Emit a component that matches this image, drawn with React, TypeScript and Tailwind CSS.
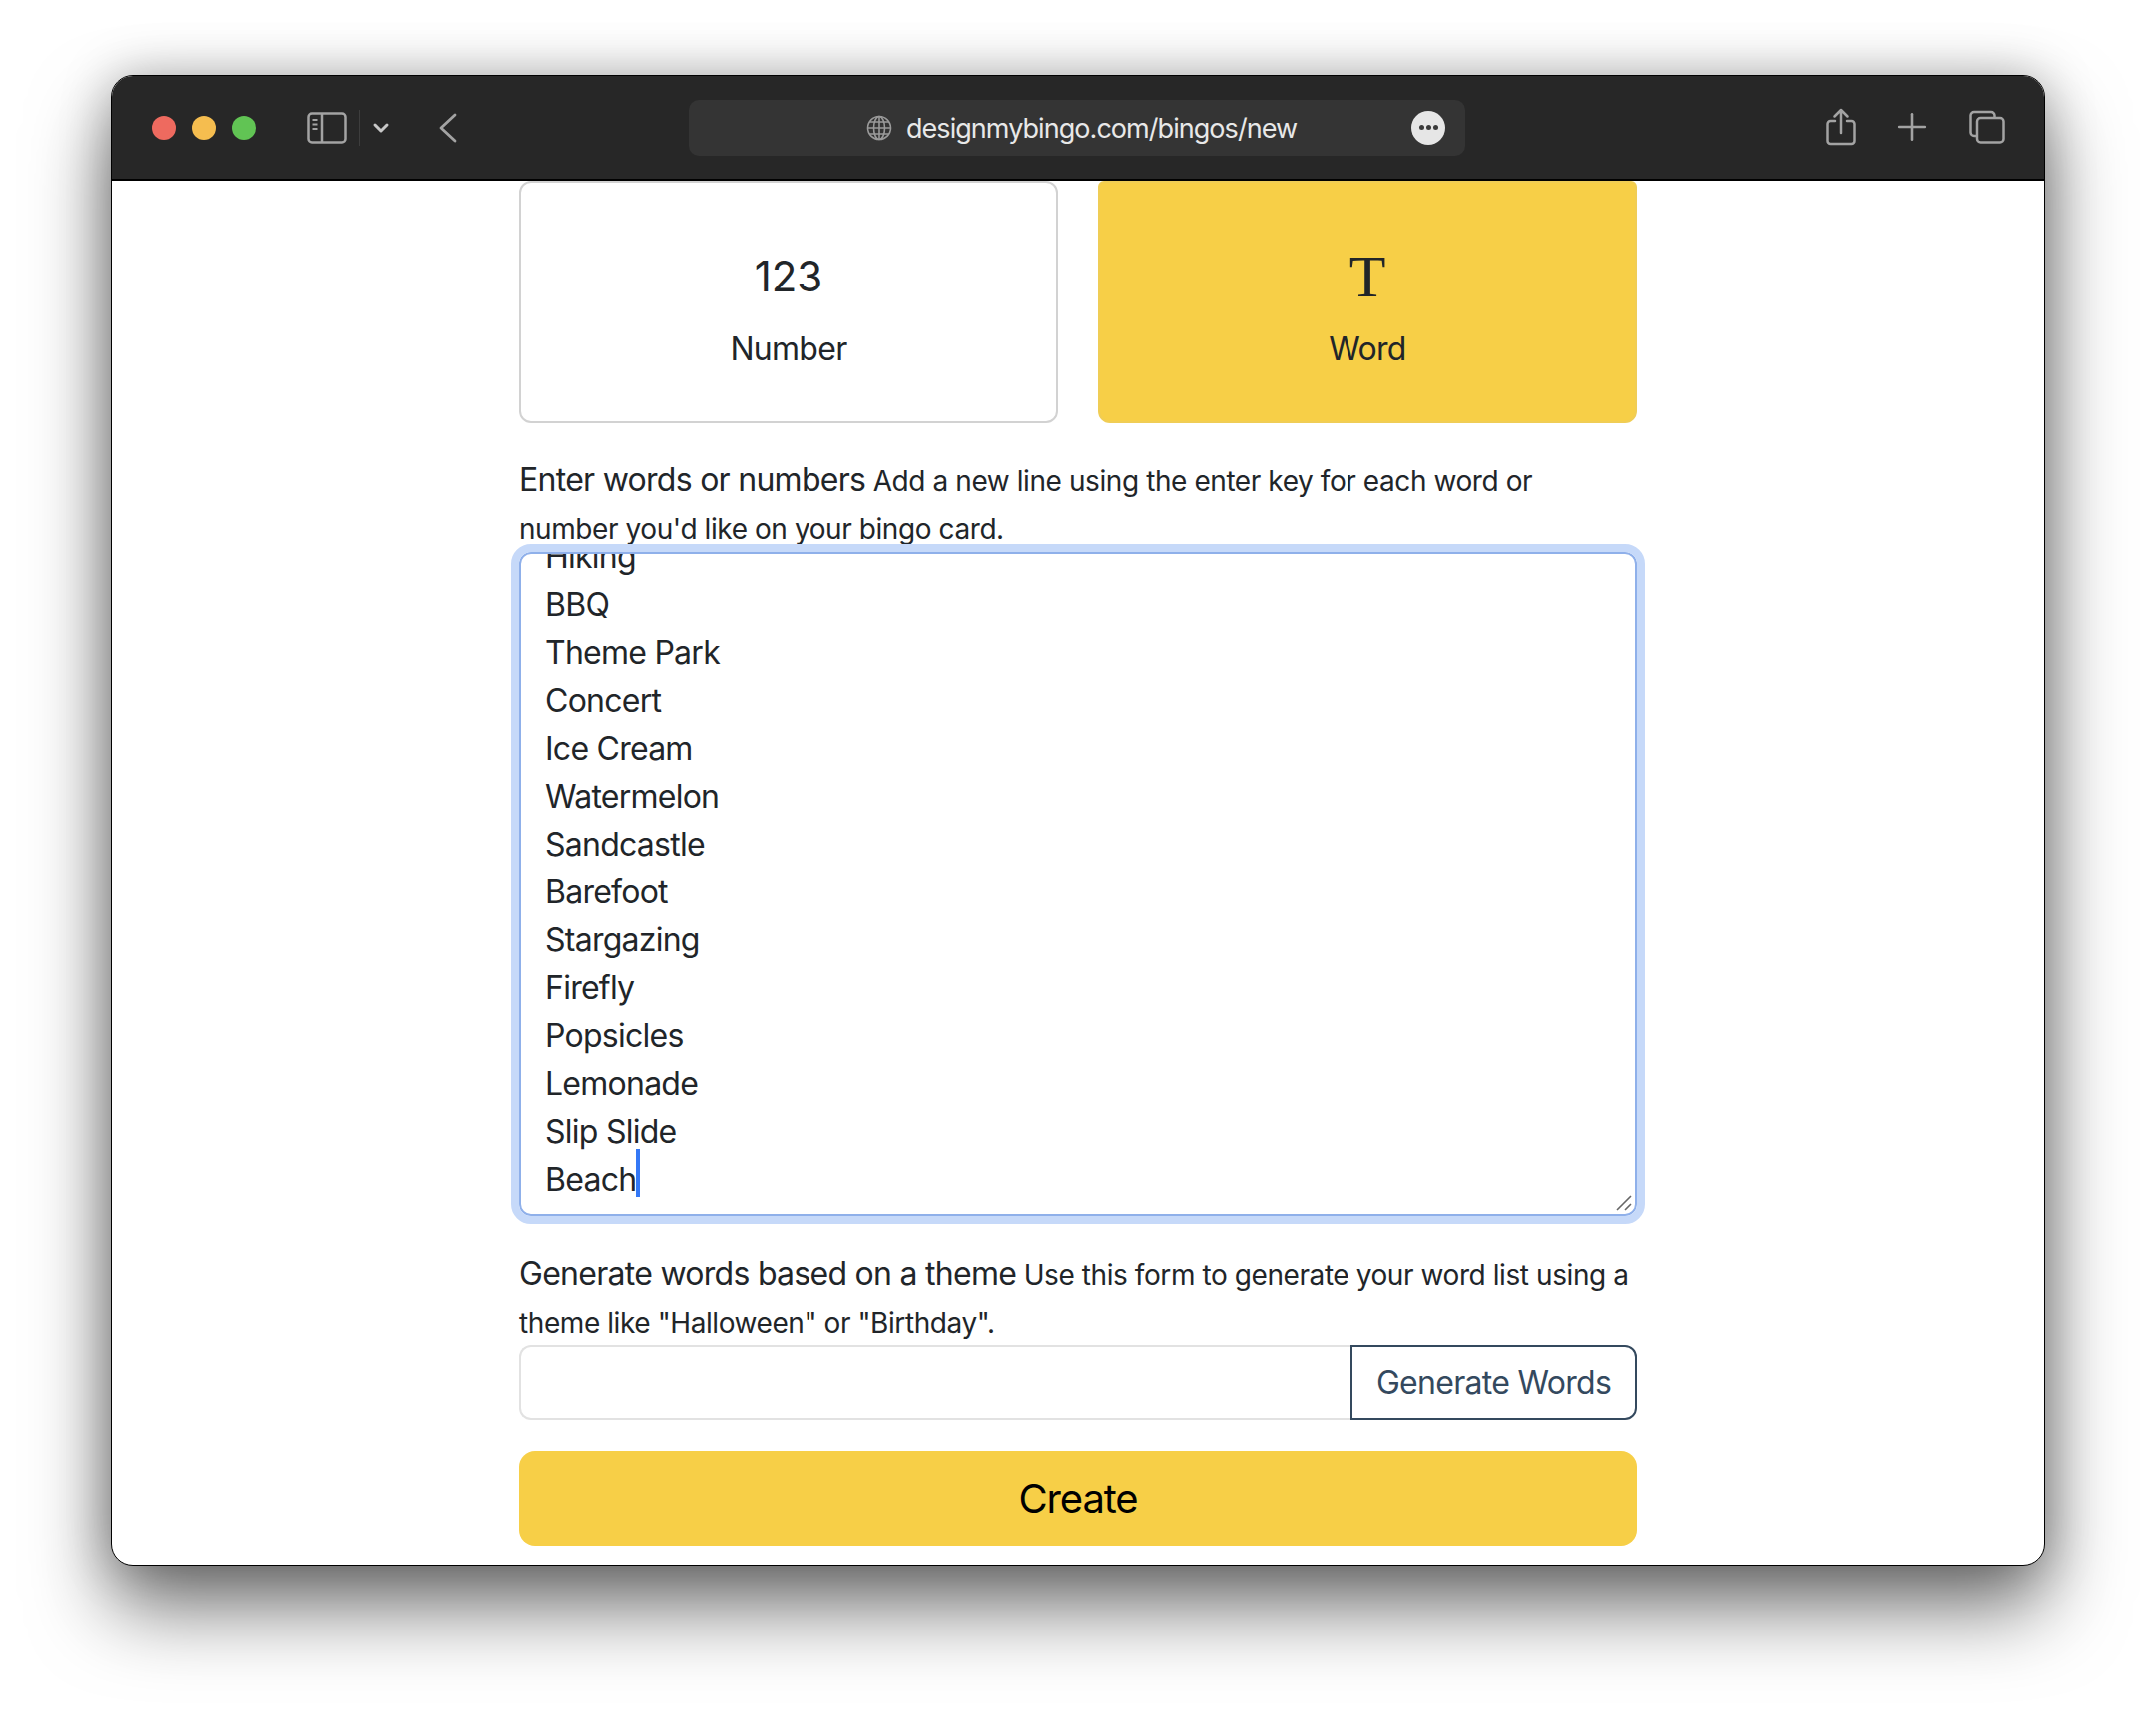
import { ChevronDown, Plus } from "lucide-react";

const FONT = "font-['Inter','Liberation_Sans',sans-serif]";

const WORDS = [
  "Hiking",
  "BBQ",
  "Theme Park",
  "Concert",
  "Ice Cream",
  "Watermelon",
  "Sandcastle",
  "Barefoot",
  "Stargazing",
  "Firefly",
  "Popsicles",
  "Lemonade",
  "Slip Slide",
];

function SidebarIcon() {
  return (
    <svg width="40" height="32" viewBox="0 0 40 32" fill="none" stroke="#a3a3a3" strokeWidth="2.5">
      <rect x="1.5" y="1.5" width="37" height="29" rx="3.5" />
      <path d="M15 1.5v29" />
      <path d="M5.5 8h5M5.5 12.5h5M5.5 17h5" strokeWidth="2" />
    </svg>
  );
}

function BackIcon() {
  return (
    <svg width="20" height="30" viewBox="0 0 20 30" fill="none" stroke="#a3a3a3" strokeWidth="2.8" strokeLinecap="round" strokeLinejoin="round">
      <path d="M17 2 3 15l14 13" />
    </svg>
  );
}

function ShareIcon() {
  return (
    <svg width="30" height="38" viewBox="0 0 30 38" fill="none" stroke="#a3a3a3" strokeWidth="2.5" strokeLinecap="round" strokeLinejoin="round">
      <path d="M9 13H4.5a3 3 0 0 0-3 3v17a3 3 0 0 0 3 3h21a3 3 0 0 0 3-3V16a3 3 0 0 0-3-3H21" />
      <path d="M15 25V2M8.5 8.5 15 2l6.5 6.5" />
    </svg>
  );
}

function TabsIcon() {
  return (
    <svg width="36" height="34" viewBox="0 0 36 34" fill="none" stroke="#a3a3a3" strokeWidth="2.5">
      <path d="M7 26H5a3.5 3.5 0 0 1-3.5-3.5v-17A3.5 3.5 0 0 1 5 2h17a3.5 3.5 0 0 1 3.5 3.5V8" />
      <rect x="8" y="8" width="26.5" height="24.5" rx="3.5" />
    </svg>
  );
}

function GlobeIcon() {
  return (
    <svg width="26" height="26" viewBox="0 0 26 26" fill="none" stroke="#9a9a9a" strokeWidth="1.6">
      <circle cx="13" cy="13" r="11.5" />
      <ellipse cx="13" cy="13" rx="5.5" ry="11.5" />
      <path d="M13 1.5v23M1.5 13h23M3.2 7h19.6M3.2 19h19.6" />
    </svg>
  );
}

function TitleBar() {
  return (
    <div className="flex h-[105px] shrink-0 items-center border-b-2 border-black bg-[#272727] pl-[40px] pr-[39px]">
      <div className="flex items-center gap-[16px]">
        <span className="h-[24px] w-[24px] rounded-full bg-[#ee6a5f]" />
        <span className="h-[24px] w-[24px] rounded-full bg-[#f5bd4f]" />
        <span className="h-[24px] w-[24px] rounded-full bg-[#61c454]" />
      </div>
      <div className="ml-[52px] flex items-center">
        <SidebarIcon />
        <span className="ml-[12px] h-[36px] w-px bg-[#3d3d3d]" />
        <ChevronDown className="ml-[9px] h-[24px] w-[24px] text-[#c8c8c8]" strokeWidth={3} />
      </div>
      <span className="ml-[45px] flex">
        <BackIcon />
      </span>
      <div className="ml-[231px] flex h-[56px] w-[778px] items-center rounded-[10px] bg-[#343434] pl-[178px] pr-[20px]">
        <GlobeIcon />
        <span className="ml-[14px] mt-[3px] text-[27px] tracking-[-0.95px] text-[#e8e8e8]">designmybingo.com/bingos/new</span>
        <span className="ml-auto flex h-[34px] w-[34px] items-center justify-center gap-[2px] rounded-full bg-[#e6e6e6]">
          <span className="h-[5px] w-[5px] rounded-full bg-[#3a3a3a]" />
          <span className="h-[5px] w-[5px] rounded-full bg-[#3a3a3a]" />
          <span className="h-[5px] w-[5px] rounded-full bg-[#3a3a3a]" />
        </span>
      </div>
      <div className="ml-auto -mt-[2px] flex items-center">
        <ShareIcon />
        <Plus className="ml-[35px] h-[44px] w-[44px] text-[#a3a3a3]" strokeWidth={1.4} />
        <span className="ml-[35px]">
          <TabsIcon />
        </span>
      </div>
    </div>
  );
}

function TypeCard({ active, label, children }: { active?: boolean; label: string; children: React.ReactNode }) {
  return (
    <div
      className={
        active
          ? "flex h-[243px] w-[540px] flex-col items-center rounded-b-[12px] rounded-t-[6px] border-2 border-[#f0cd55] bg-[#f7cf47] text-[#212529]"
          : "flex h-[243px] w-[540px] flex-col items-center rounded-[12px] border-2 border-[#d2d2d2] bg-white text-[#212529]"
      }
    >
      <div className="mt-[62px] flex h-[64px] items-center justify-center">{children}</div>
      <div className="mt-[17px] text-[32px] leading-[48px] tracking-[-0.7px]">{label}</div>
    </div>
  );
}

export default function App() {
  return (
    <div className={`h-[1716px] w-[2160px] overflow-hidden bg-white pl-[111px] pt-[75px] ${FONT}`}>
      <div className="flex h-[1494px] w-[1938px] flex-col overflow-hidden rounded-[22px] border border-black bg-white shadow-[0_42px_80px_rgba(0,0,0,0.55),0_0_50px_rgba(0,0,0,0.25)]">
        <TitleBar />
        <div className="mx-auto flex w-[1120px] flex-col text-[#212529]">
          <div className="flex justify-between">
            <TypeCard label="Number">
              <span className="text-[42px] leading-none">123</span>
            </TypeCard>
            <TypeCard active label="Word">
              <span className="font-['Liberation_Serif',serif] text-[60px] leading-none">T</span>
            </TypeCard>
          </div>

          <div className="mt-[34px] text-[28px] leading-[48px] tracking-[-0.42px]">
            <span className="text-[32px] leading-none tracking-[-0.72px]">Enter words or numbers</span>{" "}
            Add a new line using the enter key for each word or
            <br />
            number you'd like on your bingo card.
          </div>

          <div className="relative -mt-[1px] flex h-[665px] flex-col justify-end overflow-hidden rounded-[12px] border-2 border-[#8fb0ea] bg-white px-[24px] pb-[10px] text-[32px] leading-[48px] tracking-[-0.75px] outline-8 outline-[#c6d9f9]">
            {WORDS.map((word) => (
              <div key={word} className="shrink-0">
                {word}
              </div>
            ))}
            <div className="flex shrink-0 items-center">
              Beach
              <span className="-mt-[14px] h-[48px] w-[4px] shrink-0 bg-[#3478f6]" />
            </div>
            <svg className="absolute bottom-[2px] right-[2px]" width="18" height="18" viewBox="0 0 18 18" stroke="#666" strokeWidth="1.6">
              <path d="M2 16 16 2M10 16l6-6" />
            </svg>
          </div>

          <div className="mt-[35px] text-[28px] leading-[48px] tracking-[-0.42px]">
            <span className="text-[32px] leading-none tracking-[-0.72px]">Generate words based on a theme</span>{" "}
            Use this form to generate your word list using a theme like "Halloween" or "Birthday".
          </div>

          <div className="-mt-[2px] flex h-[75px]">
            <input className="min-w-0 flex-1 rounded-l-[12px] border-2 border-r-0 border-[#e2e2e2] bg-white outline-none" />
            <button className="w-[287px] rounded-r-[12px] border-2 border-[#34495e] bg-white text-[32px] tracking-[-0.7px] text-[#34495e]">Generate Words</button>
          </div>

          <button className="mt-[32px] h-[95px] rounded-[16px] bg-[#f7cf47] text-[40px] tracking-[-1.1px] text-black">Create</button>
        </div>
      </div>
    </div>
  );
}
